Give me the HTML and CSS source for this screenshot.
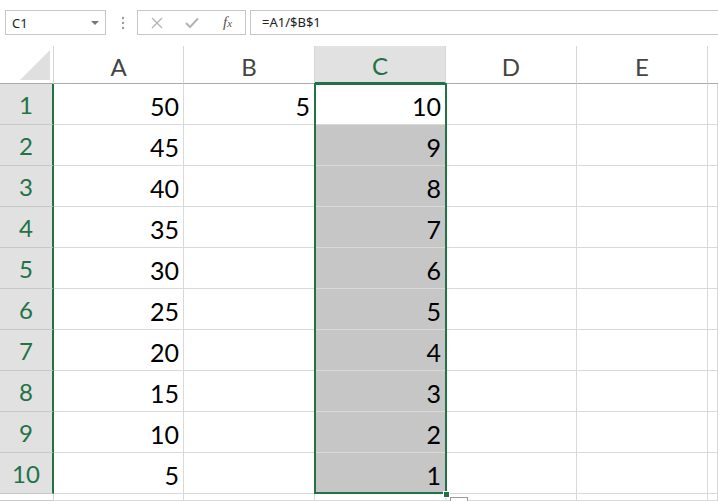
FILE: index.html
```html
<!DOCTYPE html>
<html lang="en">
<head>
  <meta charset="UTF-8" />
  <title>Sheet1</title>
  <link rel="stylesheet" href="styles.css">
</head>
<body>

<!-- Formula bar -->
<div class="toolbar">
  <div class="name-box">
    <span>C1</span>
    <span class="caret"></span>
  </div>
  <svg class="grip" width="4" height="14" viewBox="0 0 4 14">
    <circle cx="2" cy="2" r="1.2" fill="#9a9a9a" />
    <circle cx="2" cy="7" r="1.2" fill="#9a9a9a" />
    <circle cx="2" cy="12" r="1.2" fill="#9a9a9a" />
  </svg>
  <div class="fx-buttons">
    <svg width="12" height="12" viewBox="0 0 12 12">
      <path d="M1 1 L11 11 M11 1 L1 11" stroke="#b4b4b4" stroke-width="1.3" fill="none" />
    </svg>
    <svg width="14" height="12" viewBox="0 0 14 12">
      <path d="M1 6 L5 10 L13 1.5" stroke="#b4b4b4" stroke-width="2" fill="none" />
    </svg>
    <span class="fx">f<span>x</span></span>
  </div>
  <div class="formula">=A1/$B$1</div>
</div>

<!-- Sheet grid -->
<div class="sheet">
  <div class="corner"><div class="tri"></div></div>
  <div class="colhead">A</div>
  <div class="colhead">B</div>
  <div class="colhead sel">C</div>
  <div class="colhead">D</div>
  <div class="colhead">E</div>
  <div class="colhead last"></div>

  <div class="rowhead">1</div><div class="cell">50</div><div class="cell">5</div><div class="cell active">10</div><div class="cell"></div><div class="cell"></div><div class="cell"></div>
  <div class="rowhead">2</div><div class="cell">45</div><div class="cell"></div><div class="cell picked">9</div><div class="cell"></div><div class="cell"></div><div class="cell"></div>
  <div class="rowhead">3</div><div class="cell">40</div><div class="cell"></div><div class="cell picked">8</div><div class="cell"></div><div class="cell"></div><div class="cell"></div>
  <div class="rowhead">4</div><div class="cell">35</div><div class="cell"></div><div class="cell picked">7</div><div class="cell"></div><div class="cell"></div><div class="cell"></div>
  <div class="rowhead">5</div><div class="cell">30</div><div class="cell"></div><div class="cell picked">6</div><div class="cell"></div><div class="cell"></div><div class="cell"></div>
  <div class="rowhead">6</div><div class="cell">25</div><div class="cell"></div><div class="cell picked">5</div><div class="cell"></div><div class="cell"></div><div class="cell"></div>
  <div class="rowhead">7</div><div class="cell">20</div><div class="cell"></div><div class="cell picked">4</div><div class="cell"></div><div class="cell"></div><div class="cell"></div>
  <div class="rowhead">8</div><div class="cell">15</div><div class="cell"></div><div class="cell picked">3</div><div class="cell"></div><div class="cell"></div><div class="cell"></div>
  <div class="rowhead">9</div><div class="cell">10</div><div class="cell"></div><div class="cell picked">2</div><div class="cell"></div><div class="cell"></div><div class="cell"></div>
  <div class="rowhead">10</div><div class="cell">5</div><div class="cell"></div><div class="cell picked">1</div><div class="cell"></div><div class="cell"></div><div class="cell"></div>
  <div class="rowhead plain"></div><div class="cell"></div><div class="cell"></div><div class="cell"></div><div class="cell"></div><div class="cell"></div><div class="cell"></div>

  <!-- selection outline, fill handle, quick analysis -->
  <div class="selection"></div>
  <div class="quick"></div>
  <div class="handle"></div>
</div>

</body>
</html>
```

FILE: styles.css
```css
* {
  margin: 0;
  padding: 0;
  box-sizing: border-box;
}

body {
  background: #ffffff;
  width: 718px;
  height: 501px;
  overflow: hidden;
  font-family: 'Lato', 'Liberation Sans', sans-serif;
}

/* Formula bar */
.toolbar {
  height: 46px;
  display: flex;
  align-items: flex-start;
  padding: 10px 0 0 5px;
  font-family: 'Noto Sans', 'Liberation Sans', sans-serif;
  font-size: 13px;
  color: #222;
}

.name-box {
  width: 101px;
  height: 25px;
  border: 1px solid #c6c6c6;
  display: flex;
  align-items: center;
  justify-content: space-between;
  padding: 0 6px 0 6px;
}

.caret {
  width: 0;
  height: 0;
  border-left: 4px solid transparent;
  border-right: 4px solid transparent;
  border-top: 4px solid #777;
}

.grip {
  margin: 6px 0 0 15px;
}

.fx-buttons {
  width: 109px;
  height: 25px;
  margin-left: 12px;
  border: 1px solid #c6c6c6;
  display: flex;
  align-items: center;
  padding-left: 13px;
  gap: 22px;
}

.fx {
  font-family: 'Liberation Serif', serif;
  font-style: italic;
  font-size: 15px;
  color: #555;
  margin-left: 2px;
}

.fx span {
  font-size: 11px;
}

.formula {
  flex: 1;
  height: 25px;
  margin-left: 4px;
  margin-right: -4px;
  border: 1px solid #c6c6c6;
  padding: 0 0 0 11px;
  line-height: 23px;
}

/* Grid */
.sheet {
  position: relative;
  display: grid;
  grid-template-columns: 54px 130px 131px 131px 131px 131px 10px;
  grid-template-rows: 38px repeat(10, 41px) 7px;
  font-size: 25px;
  color: #000;
}

.corner {
  border-right: 1px solid #d6d6d6;
  border-bottom: 1px solid #ababab;
  position: relative;
}

.tri {
  position: absolute;
  left: 20px;
  top: 4px;
  width: 30px;
  height: 30px;
  background: #dfdfdf;
  clip-path: polygon(100% 0, 100% 100%, 0 100%);
}

.colhead {
  border-right: 1px solid #d6d6d6;
  border-bottom: 1px solid #ababab;
  display: flex;
  align-items: flex-end;
  justify-content: center;
  font-size: 24px;
  line-height: 28px;
  padding-bottom: 2px;
  color: #444;
}

.colhead.sel {
  background: #e1e1e1;
  color: #217346;
  border-bottom: 2px solid #217346;
}

.colhead.last {
  border-right: none;
}

.rowhead {
  background: #e1e1e1;
  border-right: 2px solid #217346;
  border-bottom: 1px solid #c8c8c8;
  display: flex;
  align-items: flex-end;
  justify-content: center;
  font-size: 24px;
  line-height: 28px;
  padding-bottom: 5px;
  color: #217346;
}

.rowhead.plain {
  background: #fff;
  border-right: 1px solid #d6d6d6;
}

.cell {
  border-right: 1px solid #d9d9d9;
  border-bottom: 1px solid #d9d9d9;
  display: flex;
  align-items: flex-end;
  justify-content: flex-end;
  line-height: 28px;
  padding: 0 4px 4px 0;
}

.cell.picked {
  background: #c6c6c6;
}

/* Selection outline */
.selection {
  position: absolute;
  left: 314px;
  top: 37px;
  width: 133px;
  height: 411px;
  border: 2px solid #217346;
  pointer-events: none;
}

.handle {
  position: absolute;
  left: 443px;
  top: 445px;
  width: 7px;
  height: 7px;
  background: #217346;
  border: 1px solid #fff;
}

.quick {
  position: absolute;
  left: 450px;
  top: 451px;
  width: 18px;
  height: 14px;
  background: #fff;
  border: 1px solid #9a9a9a;
}
```
